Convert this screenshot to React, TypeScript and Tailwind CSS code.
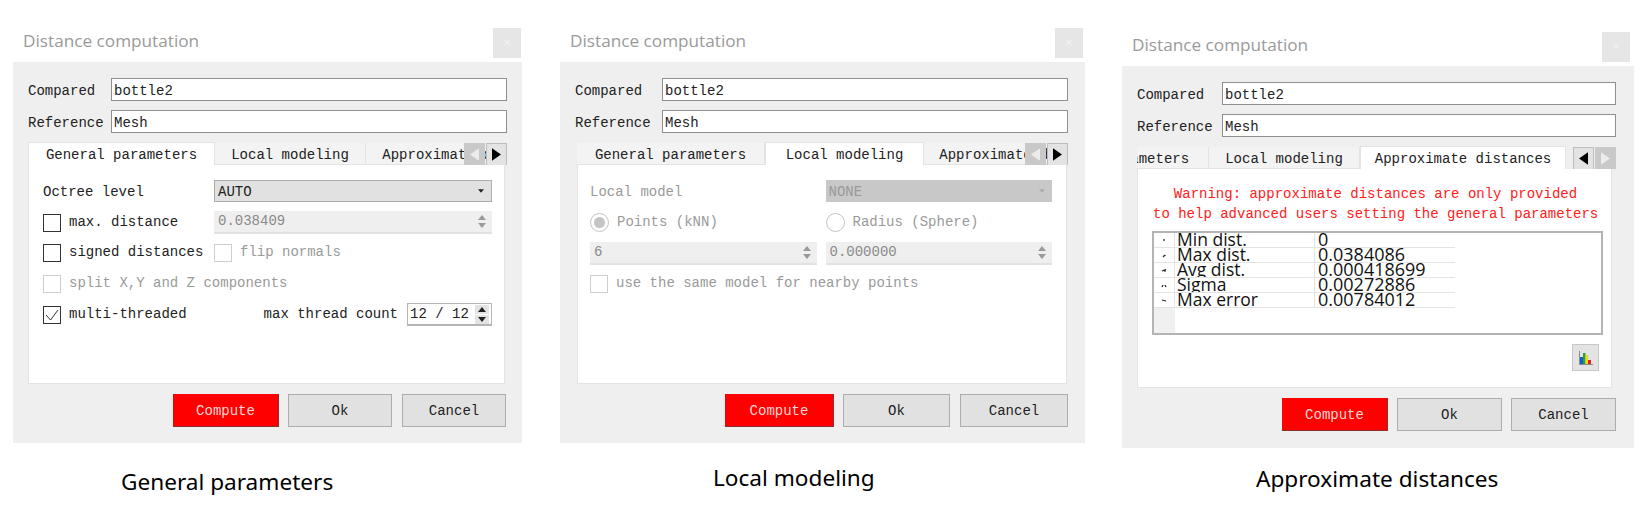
import React from 'react';

const MONO = "font-['Liberation_Mono',monospace]";

const Triangle: React.FC<{ dir: 'up' | 'down' | 'left' | 'right'; className?: string }> = ({ dir, className = '' }) => {
  const points = {
    up: '0,6 5,0 10,6',
    down: '0,0 10,0 5,6',
    left: '10,0 10,14 0,7',
    right: '0,0 0,14 10,7',
  }[dir];
  const box = dir === 'up' || dir === 'down' ? '0 0 10 6' : '0 0 10 14';
  return (
    <svg viewBox={box} className={className}>
      <polygon points={points} fill="currentColor" />
    </svg>
  );
};

const TextField: React.FC<{ label: string; value: string; labelWidth: string }> = ({ label, value, labelWidth }) => (
  <div className="flex items-center h-[23px]">
    <div className={`${labelWidth} shrink-0 pt-[3px] text-[14px] text-[#222]`}>{label}</div>
    <div className="flex-1 h-[23px] bg-white border border-[#8f8f8f] px-0.5 text-[14px] leading-[25px] text-[#222]">
      {value}
    </div>
  </div>
);

const Checkbox: React.FC<{ label: string; checked?: boolean; disabled?: boolean }> = ({
  label,
  checked = false,
  disabled = false,
}) => (
  <div className="flex items-center">
    <div
      className={`w-[18px] h-[18px] shrink-0 bg-white border flex items-center justify-center ${
        disabled ? 'border-[#cfcfcf]' : 'border-[#333]'
      }`}
    >
      {checked && (
        <svg viewBox="0 0 16 16" className="w-4 h-4">
          <polyline points="2,8 6.5,13 14,3" fill="none" stroke="#333" strokeWidth="1" />
        </svg>
      )}
    </div>
    <span className={`ml-2 text-[14px] whitespace-nowrap ${disabled ? 'text-[#9a9a9a]' : 'text-[#222]'}`}>{label}</span>
  </div>
);

const Radio: React.FC<{ label: string; selected?: boolean }> = ({ label, selected = false }) => (
  <div className="flex items-center">
    <div className="w-[19px] h-[19px] shrink-0 rounded-full bg-white border border-[#c4c4c4] flex items-center justify-center">
      {selected && <div className="w-[11px] h-[11px] rounded-full bg-[#c4c4c4]" />}
    </div>
    <span className="ml-2 text-[14px] text-[#9a9a9a] whitespace-nowrap">{label}</span>
  </div>
);

const Spin: React.FC<{ value: string; className?: string }> = ({ value, className = '' }) => (
  <div className={`h-[23px] flex items-center justify-between bg-[#efefef] border-b-2 border-[#e2e2e2] pl-1 pr-1 ${className}`}>
    <span className="text-[14px] text-[#8a8a8a]">{value}</span>
    <div className="flex flex-col gap-[3px] text-[#9a9a9a] px-[2px]">
      <Triangle dir="up" className="w-2 h-[5px]" />
      <Triangle dir="down" className="w-2 h-[5px]" />
    </div>
  </div>
);

const Combo: React.FC<{ value: string; disabled?: boolean; className?: string }> = ({ value, disabled = false, className = '' }) => (
  <div
    className={`h-[22px] flex items-center justify-between pl-[3px] pr-[7px] text-[14px] ${className} ${
      disabled ? 'bg-[#c8c8c8] text-[#999]' : 'bg-[#e1e1e1] border border-[#adadad] text-[#222]'
    }`}
  >
    <span className="pt-[2px]">{value}</span>
    <Triangle dir="down" className={`w-[6px] h-1 ${disabled ? 'text-[#aaa]' : 'text-[#222]'}`} />
  </div>
);

const TabArrows: React.FC<{ leftEnabled?: boolean }> = ({ leftEnabled = false }) => {
  const on = 'bg-[#e3e3e3] border border-[#bdbdbd] text-black';
  const off = 'bg-[#c9c9c9] text-[#ececec]';
  return (
    <div className="absolute right-0 top-[1px] flex gap-[1px]">
      <div className={`w-[21px] h-[23px] flex items-center justify-center ${leftEnabled ? on : off}`}>
        <Triangle dir="left" className="w-[9px] h-[13px]" />
      </div>
      <div className={`w-[21px] h-[23px] flex items-center justify-center ${leftEnabled ? off : on}`}>
        <Triangle dir="right" className="w-[9px] h-[13px]" />
      </div>
    </div>
  );
};

const Tab: React.FC<{ label: string; active?: boolean; width: string }> = ({ label, active = false, width }) =>
  active ? (
    <div className={`${width} shrink-0 h-[23px] bg-white border-x border-t border-[#e3e3e3] text-center text-[14px] leading-[24px] text-[#222] whitespace-nowrap relative z-10`}>
      {label}
    </div>
  ) : (
    <div className={`${width} shrink-0 h-[22px] mt-[1px] bg-[#f3f3f3] border-r border-b border-[#e3e3e3] text-center text-[14px] leading-[25px] text-[#222] whitespace-nowrap overflow-hidden`}>
      {label}
    </div>
  );

const Buttons: React.FC<{ computeWidth: string; okWidth: string; cancelWidth: string; gap: string; gap2: string; className?: string }> = ({
  computeWidth,
  okWidth,
  cancelWidth,
  gap,
  gap2,
  className = '',
}) => (
  <div className={`flex justify-end mt-[10px] ${className}`}>
    <div className={`${computeWidth} h-[33px] bg-[#ff0000] border-r border-b border-[#8a3030] text-[#ffd6d6] text-[14px] pt-[2px] flex items-center justify-center`}>
      Compute
    </div>
    <div className={`${okWidth} ${gap} h-[33px] bg-[#e1e1e1] border border-[#adadad] text-[#222] text-[14px] pt-[2px] flex items-center justify-center`}>
      Ok
    </div>
    <div className={`${cancelWidth} ${gap2} h-[33px] bg-[#e1e1e1] border border-[#adadad] text-[#222] text-[14px] pt-[2px] flex items-center justify-center`}>
      Cancel
    </div>
  </div>
);

const TitleBar: React.FC<{ className?: string }> = ({ className = 'pr-[1px]' }) => (
  <div className={`h-[34px] flex items-start justify-between ${className}`}>
    <div className="ml-[10px] mt-[1px] font-['Open_Sans',sans-serif] text-[17.2px] leading-[23px] text-[#9a9a9a]">
      Distance computation
    </div>
    <div className="w-[28px] h-[30px] bg-[#e6e6e6] flex items-center justify-center text-[13px] text-[#f4f4f4] font-['Open_Sans',sans-serif]">
      ×
    </div>
  </div>
);

const GeneralPane: React.FC = () => (
  <div className="h-[219px] bg-white border border-t-0 border-[#e3e3e3] pl-[14px] pr-[12px] pt-[15px] flex flex-col gap-2">
    <div className="h-[23px] flex items-start">
      <div className="w-[171px] shrink-0 text-[14px] text-[#222] leading-[24px]">Octree level</div>
      <Combo value="AUTO" className="flex-1" />
    </div>
    <div className="h-[23px] flex items-center">
      <div className="w-[171px] shrink-0">
        <Checkbox label="max. distance" />
      </div>
      <Spin value="0.038409" className="flex-1" />
    </div>
    <div className="h-[23px] -mt-px flex items-center">
      <div className="w-[171px] shrink-0">
        <Checkbox label="signed distances" />
      </div>
      <Checkbox label="flip normals" disabled />
    </div>
    <div className="h-[23px] flex items-center">
      <Checkbox label="split X,Y and Z components" disabled />
    </div>
    <div className="h-[23px] flex items-center justify-between">
      <Checkbox label="multi-threaded" checked />
      <div className="flex items-center">
        <span className="text-[14px] text-[#222] mr-[9px]">max thread count</span>
        <div className="w-[85px] h-[23px] bg-white border border-[#b5b5b5] border-b-2 flex items-center justify-between pl-[2px] pr-[2px] text-[14px] text-[#222]">
          <span>12 / 12</span>
          <div className="flex flex-col gap-[1px]">
            <div className="w-[14px] h-[9px] bg-[#e3e3e3] flex items-center justify-center">
              <Triangle dir="up" className="w-2 h-[5px]" />
            </div>
            <div className="w-[14px] h-[9px] bg-[#e3e3e3] flex items-center justify-center">
              <Triangle dir="down" className="w-2 h-[5px]" />
            </div>
          </div>
        </div>
      </div>
    </div>
  </div>
);

const LocalPane: React.FC = () => (
  <div className="h-[219px] bg-white border border-t-0 border-[#e3e3e3] pl-[12px] pr-[14px] pt-[15px] flex flex-col gap-2">
    <div className="h-[23px] grid grid-cols-2 gap-x-[9px]">
      <div className="text-[14px] text-[#9a9a9a] leading-[24px]">Local model</div>
      <Combo value="NONE" disabled />
    </div>
    <div className="h-[23px] grid grid-cols-2 gap-x-[9px] items-center">
      <Radio label="Points (kNN)" selected />
      <Radio label="Radius (Sphere)" />
    </div>
    <div className="h-[23px] grid grid-cols-2 gap-x-[9px]">
      <Spin value="6" />
      <Spin value="0.000000" />
    </div>
    <div className="h-[23px] -mt-px flex items-center">
      <Checkbox label="use the same model for nearby points" disabled />
    </div>
  </div>
);

const stats = [
  { name: 'Min dist.', value: '0', mark: 'M4 5v2' },
  { name: 'Max dist.', value: '0.0384086', mark: 'M3 8l2-2M5 6v1' },
  { name: 'Avg dist.', value: '0.000418699', mark: 'M2 7l4-1.5M4 7h2' },
  { name: 'Sigma', value: '0.00272886', mark: 'M2 8l1-2M5 6l1 2' },
  { name: 'Max error', value: '0.00784012', mark: 'M2 6l4 1' },
];

const ApproxPane: React.FC = () => (
  <div className="h-[219px] bg-white border border-t-0 border-[#e3e3e3] pl-[15px] pr-[13px] flex flex-col">
    <div className="pt-[15px] text-center text-[14px] leading-[20px] text-[#ff2020] whitespace-nowrap">
      <div>Warning: approximate distances are only provided</div>
      <div>to help advanced users setting the general parameters</div>
    </div>
    <div className="mt-[7px] -ml-px -mr-[5px] h-[104px] border-2 border-[#b4b4b4] flex flex-col">
      {stats.map((row) => (
        <div key={row.name} className="flex h-[15px] w-[301px] overflow-hidden border-b border-[#e4e4e4] font-['Open_Sans',sans-serif] text-[17.5px] leading-[13px] text-[#111]">
          <div className="w-[21px] shrink-0 border-r border-[#e4e4e4] flex items-center justify-center">
            <svg viewBox="0 0 8 12" className="w-2 h-3">
              <path d={row.mark} fill="none" stroke="#222" strokeWidth="1.2" />
            </svg>
          </div>
          <div className="w-[140px] shrink-0 pl-[2px] border-r border-[#e4e4e4] whitespace-nowrap">{row.name}</div>
          <div className="flex-1 pl-[3px] text-[18px] whitespace-nowrap">{row.value}</div>
        </div>
      ))}
      <div className="w-[21px] flex-1 bg-[#f0f0f0]" />
    </div>
    <div className="flex justify-end mt-[9px] -mr-px">
      <div className="w-[27px] h-[27px] bg-[#e3e3e3] border border-[#c8c8c8] flex items-center justify-center">
        <svg viewBox="0 0 16 16" className="w-4 h-4">
          <path d="M1.5 1v13.5H15" fill="none" stroke="#8a8a8a" strokeWidth="1" />
          <rect x="2" y="7" width="3" height="7" fill="#1060d0" />
          <rect x="5" y="3" width="2.5" height="11" fill="#30a030" />
          <rect x="7.5" y="5" width="2.5" height="9" fill="#e8d820" />
          <rect x="10" y="10" width="3" height="4" fill="#e02020" />
        </svg>
      </div>
    </div>
  </div>
);

export default function App() {
  return (
    <div className={`w-[1640px] h-[517px] bg-white flex items-start overflow-hidden ${MONO}`}>
      {/* General parameters */}
      <div className="ml-[13px] w-[509px] mt-[28px] shrink-0">
        <TitleBar />
        <div className="h-[381px] bg-[#efefef] pl-[15px] pr-[15px] pt-[16px]">
          <div className="flex flex-col gap-[9px]">
            <TextField label="Compared" value="bottle2" labelWidth="w-[83px]" />
            <TextField label="Reference" value="Mesh" labelWidth="w-[83px]" />
          </div>
          <div className="relative mt-[9px] flex h-[23px] overflow-hidden">
            <Tab label="General parameters" active width="w-[187px]" />
            <Tab label="Local modeling" width="w-[151px]" />
            <Tab label="Approximate distances" width="w-[210px]" />
            <TabArrows />
          </div>
          <div className="w-[477px]">
            <GeneralPane />
          </div>
          <Buttons computeWidth="w-[106px]" okWidth="w-[104px]" cancelWidth="w-[104px]" gap="ml-[9px]" gap2="ml-[10px]" className="pr-[1px]" />
        </div>
        <div className="ml-[108px] mt-[24px] h-[30px] font-['Noto_Sans',sans-serif] text-[22.6px] leading-[30px] text-black">
          General parameters
        </div>
      </div>

      {/* Local modeling */}
      <div className="ml-[38px] w-[525px] mt-[28px] shrink-0">
        <TitleBar className="pr-[2px]" />
        <div className="h-[381px] bg-[#efefef] pl-[15px] pr-[17px] pt-[16px]">
          <div className="flex flex-col gap-[9px]">
            <TextField label="Compared" value="bottle2" labelWidth="w-[87px]" />
            <TextField label="Reference" value="Mesh" labelWidth="w-[87px]" />
          </div>
          <div className="relative ml-[2px] mt-[9px] flex h-[23px] overflow-hidden">
            <Tab label="General parameters" width="w-[188px]" />
            <Tab label="Local modeling" active width="w-[159px]" />
            <Tab label="Approximate distances" width="w-[208px]" />
            <TabArrows />
          </div>
          <div className="ml-[2px] w-[490px]">
            <LocalPane />
          </div>
          <Buttons computeWidth="w-[109px]" okWidth="w-[107px]" cancelWidth="w-[108px]" gap="ml-[9px]" gap2="ml-[10px]" />
        </div>
        <div className="ml-[153px] mt-[20px] h-[30px] font-['Noto_Sans',sans-serif] text-[22.6px] leading-[30px] text-black">
          Local modeling
        </div>
      </div>

      {/* Approximate distances */}
      <div className="ml-[37px] w-[512px] mt-[32px] shrink-0">
        <TitleBar className="pr-[4px]" />
        <div className="h-[382px] bg-[#efefef] pl-[15px] pr-[18px] pt-[16px]">
          <div className="flex flex-col gap-[9px]">
            <TextField label="Compared" value="bottle2" labelWidth="w-[85px]" />
            <TextField label="Reference" value="Mesh" labelWidth="w-[85px]" />
          </div>
          <div className="relative mt-[9px] flex justify-end pr-[50px] h-[23px] overflow-hidden">
            <Tab label="General parameters" width="w-[190px]" />
            <Tab label="Local modeling" width="w-[151px]" />
            <Tab label="Approximate distances" active width="w-[206px]" />
            <TabArrows leftEnabled />
          </div>
          <div className="w-[475px]">
            <ApproxPane />
          </div>
          <Buttons computeWidth="w-[106px]" okWidth="w-[105px]" cancelWidth="w-[105px]" gap="ml-[9px]" gap2="ml-[9px]" />
        </div>
        <div className="ml-[134px] mt-[16px] h-[30px] font-['Noto_Sans',sans-serif] text-[22.6px] leading-[30px] text-black">
          Approximate distances
        </div>
      </div>
    </div>
  );
}
